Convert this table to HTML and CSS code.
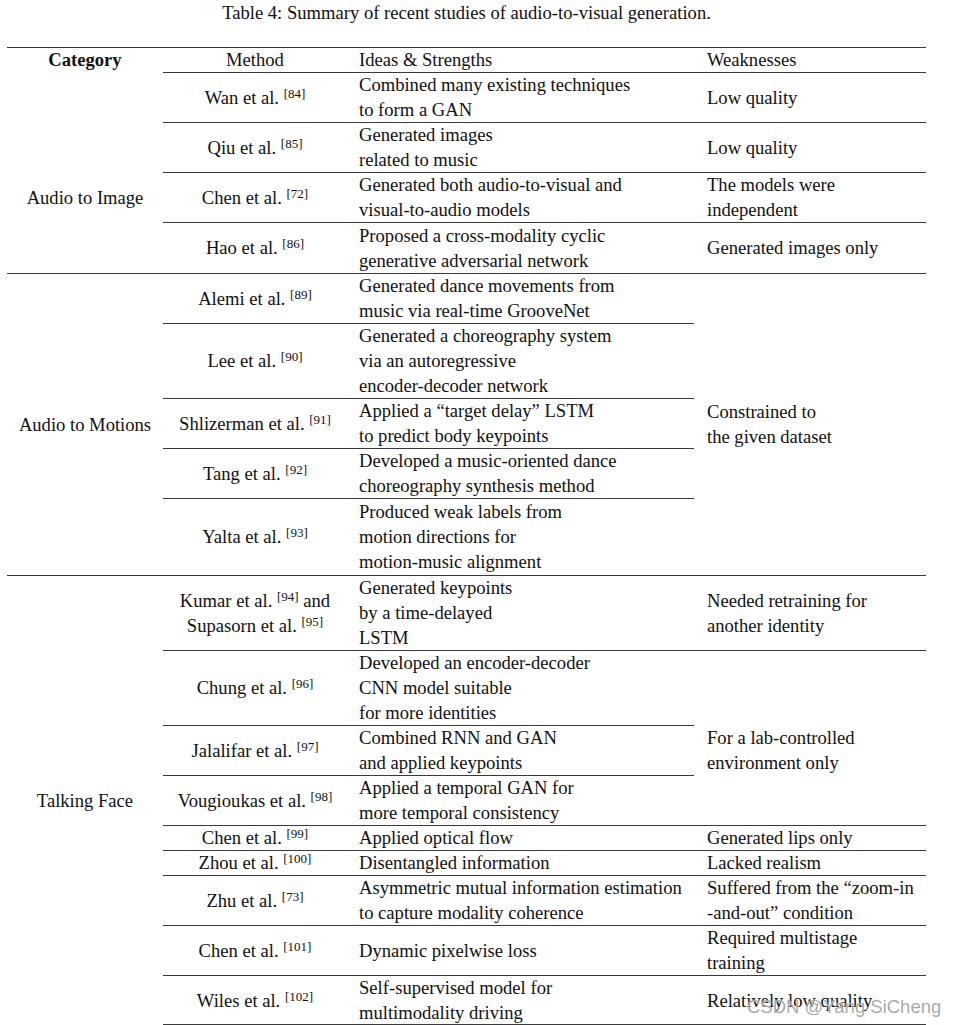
FILE: index.html
```html
<!DOCTYPE html>
<html lang="en">
<head>
<meta charset="utf-8">
<title>Table 4</title>
<link rel="stylesheet" href="styles.css">
</head>
<body>
<div class="page">
<table class="summary">
  <caption>Table 4: Summary of recent studies of audio-to-visual generation.</caption>
  <colgroup>
    <col class="c-cat"><col class="c-meth"><col class="c-idea"><col class="c-weak">
  </colgroup>
  <thead>
    <tr>
      <th class="cat r bold">Category</th>
      <th class="meth r">Method</th>
      <th class="idea r">Ideas &amp; Strengths</th>
      <th class="weak r">Weaknesses</th>
    </tr>
  </thead>
  <tbody>
    <tr>
      <td class="cat img-cat" rowspan="4">Audio to Image</td>
      <td class="meth r">Wan et al. <sup>[84]</sup></td>
      <td class="idea r">Combined many existing techniques<br>to form a GAN</td>
      <td class="weak r">Low quality</td>
    </tr>
    <tr>
      <td class="meth r">Qiu et al. <sup>[85]</sup></td>
      <td class="idea r">Generated images<br>related to music</td>
      <td class="weak r">Low quality</td>
    </tr>
    <tr>
      <td class="meth r">Chen et al. <sup>[72]</sup></td>
      <td class="idea r">Generated both audio-to-visual and<br>visual-to-audio models</td>
      <td class="weak r">The models were<br>independent</td>
    </tr>
    <tr class="h51">
      <td class="meth r">Hao et al. <sup>[86]</sup></td>
      <td class="idea r">Proposed a cross-modality cyclic<br>generative adversarial network</td>
      <td class="weak r">Generated images only</td>
    </tr>

    <tr>
      <td class="cat r" rowspan="5">Audio to Motions</td>
      <td class="meth r">Alemi et al. <sup>[89]</sup></td>
      <td class="idea r">Generated dance movements from<br>music via real-time GrooveNet</td>
      <td class="weak r" rowspan="5">Constrained to<br>the given dataset</td>
    </tr>
    <tr>
      <td class="meth r">Lee et al. <sup>[90]</sup></td>
      <td class="idea r">Generated a choreography system<br>via an autoregressive<br>encoder-decoder network</td>
    </tr>
    <tr>
      <td class="meth r">Shlizerman et al. <sup>[91]</sup></td>
      <td class="idea r">Applied a “target delay” LSTM<br>to predict body keypoints</td>
    </tr>
    <tr>
      <td class="meth r">Tang et al. <sup>[92]</sup></td>
      <td class="idea r">Developed a music-oriented dance<br>choreography synthesis method</td>
    </tr>
    <tr class="h77">
      <td class="meth r">Yalta et al. <sup>[93]</sup></td>
      <td class="idea r">Produced weak labels from<br>motion directions for<br>motion-music alignment</td>
    </tr>

    <tr>
      <td class="cat r" rowspan="10">Talking Face</td>
      <td class="meth r">Kumar et al. <sup>[94]</sup> and<br>Supasorn et al. <sup>[95]</sup></td>
      <td class="idea r">Generated keypoints<br>by a time-delayed<br>LSTM</td>
      <td class="weak r">Needed retraining for<br>another identity</td>
    </tr>
    <tr>
      <td class="meth r">Chung et al. <sup>[96]</sup></td>
      <td class="idea r">Developed an encoder-decoder<br>CNN model suitable<br>for more identities</td>
      <td class="weak r lab" rowspan="3">For a lab-controlled<br>environment only</td>
    </tr>
    <tr>
      <td class="meth r">Jalalifar et al. <sup>[97]</sup></td>
      <td class="idea r">Combined RNN and GAN<br>and applied keypoints</td>
    </tr>
    <tr>
      <td class="meth r">Vougioukas et al. <sup>[98]</sup></td>
      <td class="idea r">Applied a temporal GAN for<br>more temporal consistency</td>
    </tr>
    <tr>
      <td class="meth r">Chen et al. <sup>[99]</sup></td>
      <td class="idea r">Applied optical flow</td>
      <td class="weak r">Generated lips only</td>
    </tr>
    <tr>
      <td class="meth r">Zhou et al. <sup>[100]</sup></td>
      <td class="idea r">Disentangled information</td>
      <td class="weak r">Lacked realism</td>
    </tr>
    <tr>
      <td class="meth r">Zhu et al. <sup>[73]</sup></td>
      <td class="idea r">Asymmetric mutual information estimation<br>to capture modality coherence</td>
      <td class="weak r">Suffered from the “zoom-in<br>-and-out” condition</td>
    </tr>
    <tr>
      <td class="meth r">Chen et al. <sup>[101]</sup></td>
      <td class="idea r">Dynamic pixelwise loss</td>
      <td class="weak r">Required multistage<br>training</td>
    </tr>
    <tr class="last">
      <td class="meth r">Wiles et al. <sup>[102]</sup></td>
      <td class="idea r">Self-supervised model for<br>multimodality driving</td>
      <td class="weak r">Relatively low quality</td>
    </tr>
  </tbody>
</table>
<div class="watermark">CSDN @Yang SiCheng</div>
</div>
</body>
</html>
```

FILE: styles.css
```css
html, body {
  margin: 0;
  padding: 0;
  background: #ffffff;
}

.page {
  position: relative;
  width: 955px;
  height: 1025px;
  overflow: hidden;
  padding-left: 7px;
  box-sizing: border-box;
  font-family: "Liberation Serif", "Times New Roman", serif;
  font-size: 18.6px;
  color: #111;
}

.summary {
  width: 919px;
  table-layout: fixed;
  border-collapse: collapse;
  border-spacing: 0;
}

.summary caption {
  line-height: 25px;
  padding-bottom: 22px;
  text-align: center;
  white-space: nowrap;
}

.c-cat { width: 156px; }
.c-meth { width: 184px; }
.c-idea { width: 347px; }
.c-weak { width: 232px; }

.summary th,
.summary td {
  padding: 0 12px;
  line-height: 25px;
  vertical-align: middle;
  font-weight: normal;
  white-space: nowrap;
}

.summary .bold {
  font-weight: bold;
}

.summary .r {
  box-shadow: inset 0 1px 0 #3a3a3a;
}

.summary .last td {
  box-shadow: inset 0 1px 0 #3a3a3a, inset 0 -1px 0 #3a3a3a;
}

.summary .h51 { height: 51px; }
.summary .h77 { height: 77px; }

.cat, .meth {
  text-align: center;
}

.summary .cat {
  padding: 0;
}

.idea, .weak {
  text-align: left;
}

.summary .weak {
  padding-left: 13px;
}

.summary .img-cat {
  padding-top: 50px;
}

.summary .lab {
  padding-top: 24px;
}

sup {
  font-size: 0.7em;
  line-height: 0;
  vertical-align: 0.5em;
}

.watermark {
  position: absolute;
  left: 747px;
  top: 995px;
  font-family: "Liberation Sans", Arial, sans-serif;
  font-size: 18.5px;
  line-height: 24px;
  color: rgba(140, 140, 140, 0.75);
  text-shadow: 0 0 1px #fff;
  white-space: nowrap;
}
```
